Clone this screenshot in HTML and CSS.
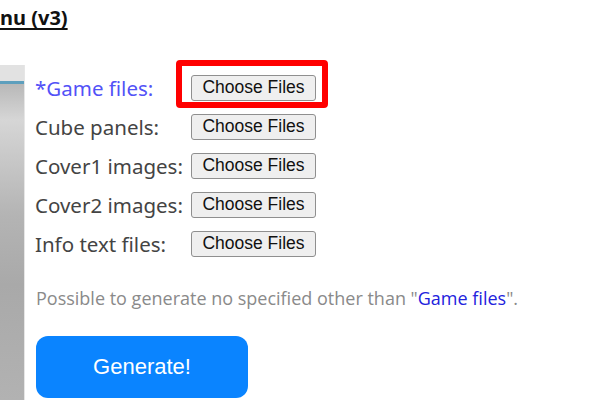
FILE: index.html
```html
<!DOCTYPE html>
<html>
<head>
<meta charset="utf-8">
<link rel="stylesheet" href="styles.css">
</head>
<body>
<h1 class="title">nu (v3)</h1>
<div class="main">
  <div class="side"></div>
  <div class="content">
    <div class="form">
      <div class="label req">*Game files:</div>
      <div class="cell"><span class="highlight"></span><button class="file">Choose Files</button></div>
      <div class="label">Cube panels:</div>
      <div class="cell"><button class="file">Choose Files</button></div>
      <div class="label">Cover1 images:</div>
      <div class="cell"><button class="file">Choose Files</button></div>
      <div class="label">Cover2 images:</div>
      <div class="cell"><button class="file">Choose Files</button></div>
      <div class="label">Info text files:</div>
      <div class="cell"><button class="file">Choose Files</button></div>
    </div>
    <p class="note">Possible to generate no specified other than "<span class="blue">Game files</span>".</p>
    <button class="generate">Generate!</button>
  </div>
</div>
</body>
</html>
```

FILE: styles.css
```css
html, body {
  margin: 0;
  padding: 0;
  background: #ffffff;
  overflow: hidden;
}
body {
  width: 600px;
  height: 400px;
}
.title {
  margin: 0;
  padding-top: 4px;
  height: 65px;
  box-sizing: border-box;
  font-family: "Noto Sans", sans-serif;
  font-weight: 700;
  font-size: 20px;
  line-height: 28px;
  color: #111;
  text-decoration: underline;
  text-underline-offset: 3px;
}
.main {
  display: flex;
  height: 335px;
}
.side {
  width: 24px;
  flex: none;
  background: linear-gradient(to bottom,
    #e2e2e2 0px, #e2e2e2 16px,
    #5d9fbd 16px, #5d9fbd 19px,
    #b8b8b8 19px, #d6d6d6 55px, #b4b4b4 150px, #a9a9a9 220px, #b2b2b2 335px);
  border-right: 1px solid #e6e6e6;
}
.content {
  padding-left: 10px;
  padding-top: 3px;
}
.form {
  display: grid;
  grid-template-columns: 156px auto;
  grid-auto-rows: 39px;
  align-items: center;
}
.label {
  font-family: "Noto Sans", sans-serif;
  font-size: 20.5px;
  color: #444;
  white-space: nowrap;
}
.label.req {
  color: #5252f7;
}
.cell {
  position: relative;
  display: flex;
}
.file {
  width: 125px;
  height: 26px;
  padding: 0;
  margin: 0;
  box-sizing: border-box;
  background: #efefef;
  border: 1px solid #8f8f8f;
  border-radius: 3px;
  font-family: "Liberation Sans", Arial, sans-serif;
  font-size: 17.5px;
  color: #111;
}
.highlight {
  position: absolute;
  left: -15px;
  top: -15px;
  width: 152px;
  height: 48px;
  box-sizing: border-box;
  border: 6px solid #ff0000;
  border-radius: 4px;
}
.note {
  margin: 23px 0 0 1px;
  font-family: "Open Sans", sans-serif;
  font-size: 18px;
  line-height: 24px;
  color: #8a8a8a;
}
.blue {
  color: #2222dd;
}
.generate {
  margin-top: 26px;
  margin-left: 1px;
  width: 212px;
  height: 62px;
  border: none;
  border-radius: 12px;
  background: #0a84ff;
  color: #ffffff;
  font-family: "Liberation Sans", Arial, sans-serif;
  font-size: 22px;
}
```
